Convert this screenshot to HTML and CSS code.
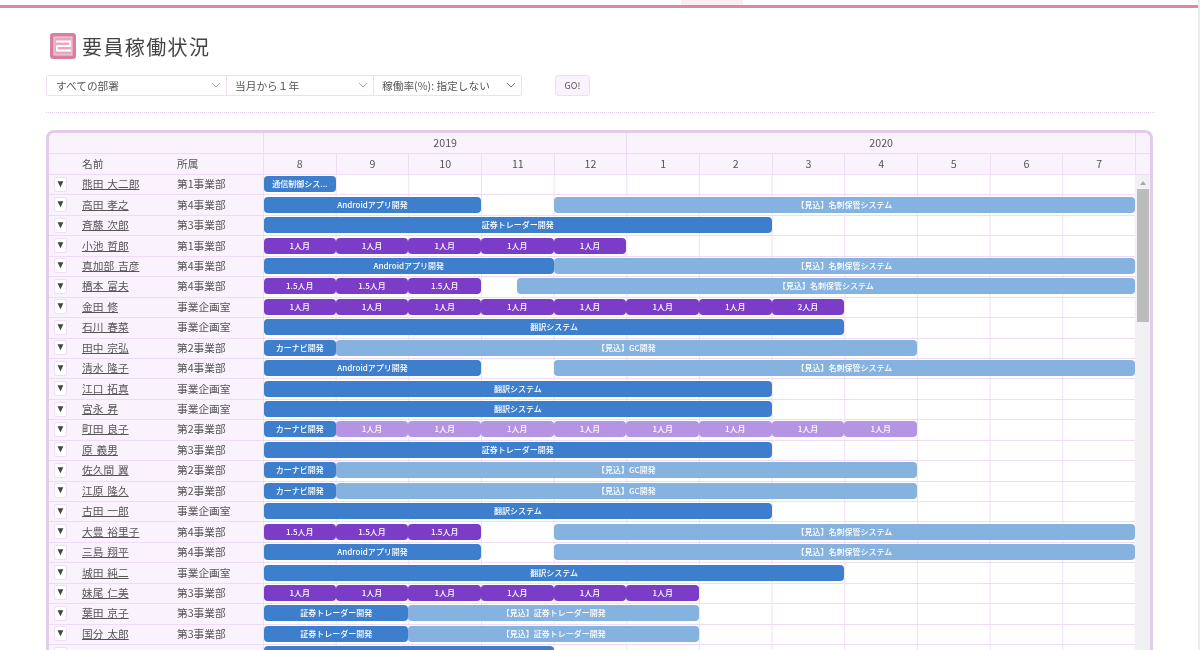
FILE: index.html
```html
<!DOCTYPE html>
<html lang="ja">
<head>
  <meta charset="UTF-8" />
  <title>要員稼働状況</title>
  <link rel="stylesheet" href="styles.css">
</head>
<body>
  <div class="topbar"><div class="topbar-tab"></div></div>
  <main class="content">
    <h1 class="title">
      <svg class="title-icon" width="26" height="26" viewBox="0 0 26 26">
        <rect width="26" height="26" rx="3" fill="#d87fa0"/>
        <rect x="4" y="4" width="18" height="18" fill="#e6a9c0" stroke="#f3d0dd" stroke-width="1"/>
        <path d="M6 8.5H20V13H7V17.5H21" fill="none" stroke="#fff" stroke-width="1.8"/>
      </svg>
      要員稼働状況
    </h1>

    <div class="filters">
      <div class="filter-group">
        <div class="filter filter-dept">すべての部署<svg width="10" height="6" viewBox="0 0 10 6"><path d="M1 1l4 4 4-4" fill="none" stroke="#aaa"/></svg></div>
        <div class="filter filter-term">当月から１年<svg width="10" height="6" viewBox="0 0 10 6"><path d="M1 1l4 4 4-4" fill="none" stroke="#aaa"/></svg></div>
        <div class="filter filter-rate">稼働率(%): 指定しない<svg width="10" height="6" viewBox="0 0 10 6"><path d="M1 1l4 4 4-4" fill="none" stroke="#777"/></svg></div>
      </div>
      <button class="go">GO!</button>
    </div>

    <div class="gantt">
      <div class="head">
        <div class="head-left"></div>
        <div class="head-years">
          <div class="year y2019">2019</div>
          <div class="year y2020">2020</div>
        </div>
        <div class="head-gutter"></div>
      </div>
      <div class="head">
        <div class="head-left">
          <span class="col-name">名前</span>
          <span class="col-dept">所属</span>
        </div>
        <div class="head-months">
          <div>8</div><div>9</div><div>10</div><div>11</div><div>12</div><div>1</div>
          <div>2</div><div>3</div><div>4</div><div>5</div><div>6</div><div>7</div>
        </div>
        <div class="head-gutter"></div>
      </div>

      <div class="body">
        <div class="rows">
          <div class="row"><div class="who"><button class="toggle">▼</button><a class="name">熊田 大二郎</a><span class="dept">第1事業部</span></div><div class="line">
            <div class="bar blue" style="grid-column: 1 / span 1">通信制御シス...</div>
          </div></div>
          <div class="row"><div class="who"><button class="toggle">▼</button><a class="name">高田 孝之</a><span class="dept">第4事業部</span></div><div class="line">
            <div class="bar blue" style="grid-column: 1 / span 3">Androidアプリ開発</div>
            <div class="bar sky" style="grid-column: 5 / span 8">【見込】名刺保管システム</div>
          </div></div>
          <div class="row"><div class="who"><button class="toggle">▼</button><a class="name">斉藤 次郎</a><span class="dept">第3事業部</span></div><div class="line">
            <div class="bar blue" style="grid-column: 1 / span 7">証券トレーダー開発</div>
          </div></div>
          <div class="row"><div class="who"><button class="toggle">▼</button><a class="name">小池 哲郎</a><span class="dept">第1事業部</span></div><div class="line">
            <div class="bar purple">1人月</div><div class="bar purple">1人月</div><div class="bar purple">1人月</div><div class="bar purple">1人月</div><div class="bar purple">1人月</div>
          </div></div>
          <div class="row"><div class="who"><button class="toggle">▼</button><a class="name">真加部 吉彦</a><span class="dept">第4事業部</span></div><div class="line">
            <div class="bar blue" style="grid-column: 1 / span 4">Androidアプリ開発</div>
            <div class="bar sky" style="grid-column: 5 / span 8">【見込】名刺保管システム</div>
          </div></div>
          <div class="row"><div class="who"><button class="toggle">▼</button><a class="name">橋本 富夫</a><span class="dept">第4事業部</span></div><div class="line">
            <div class="bar purple">1.5人月</div><div class="bar purple">1.5人月</div><div class="bar purple">1.5人月</div>
            <div class="bar sky mid-start" style="grid-column: 4 / span 9">【見込】名刺保管システム</div>
          </div></div>
          <div class="row"><div class="who"><button class="toggle">▼</button><a class="name">金田 修</a><span class="dept">事業企画室</span></div><div class="line">
            <div class="bar purple">1人月</div><div class="bar purple">1人月</div><div class="bar purple">1人月</div><div class="bar purple">1人月</div><div class="bar purple">1人月</div><div class="bar purple">1人月</div><div class="bar purple">1人月</div><div class="bar purple">2人月</div>
          </div></div>
          <div class="row"><div class="who"><button class="toggle">▼</button><a class="name">石川 春菜</a><span class="dept">事業企画室</span></div><div class="line">
            <div class="bar blue" style="grid-column: 1 / span 8">翻訳システム</div>
          </div></div>
          <div class="row"><div class="who"><button class="toggle">▼</button><a class="name">田中 宗弘</a><span class="dept">第2事業部</span></div><div class="line">
            <div class="bar blue" style="grid-column: 1 / span 1">カーナビ開発</div>
            <div class="bar sky" style="grid-column: 2 / span 8">【見込】GC開発</div>
          </div></div>
          <div class="row"><div class="who"><button class="toggle">▼</button><a class="name">清水 隆子</a><span class="dept">第4事業部</span></div><div class="line">
            <div class="bar blue" style="grid-column: 1 / span 3">Androidアプリ開発</div>
            <div class="bar sky" style="grid-column: 5 / span 8">【見込】名刺保管システム</div>
          </div></div>
          <div class="row"><div class="who"><button class="toggle">▼</button><a class="name">江口 拓真</a><span class="dept">事業企画室</span></div><div class="line">
            <div class="bar blue" style="grid-column: 1 / span 7">翻訳システム</div>
          </div></div>
          <div class="row"><div class="who"><button class="toggle">▼</button><a class="name">宮永 昇</a><span class="dept">事業企画室</span></div><div class="line">
            <div class="bar blue" style="grid-column: 1 / span 7">翻訳システム</div>
          </div></div>
          <div class="row"><div class="who"><button class="toggle">▼</button><a class="name">町田 良子</a><span class="dept">第2事業部</span></div><div class="line">
            <div class="bar blue">カーナビ開発</div>
            <div class="bar lilac">1人月</div><div class="bar lilac">1人月</div><div class="bar lilac">1人月</div><div class="bar lilac">1人月</div><div class="bar lilac">1人月</div><div class="bar lilac">1人月</div><div class="bar lilac">1人月</div><div class="bar lilac">1人月</div>
          </div></div>
          <div class="row"><div class="who"><button class="toggle">▼</button><a class="name">原 義男</a><span class="dept">第3事業部</span></div><div class="line">
            <div class="bar blue" style="grid-column: 1 / span 7">証券トレーダー開発</div>
          </div></div>
          <div class="row"><div class="who"><button class="toggle">▼</button><a class="name">佐久間 翼</a><span class="dept">第2事業部</span></div><div class="line">
            <div class="bar blue" style="grid-column: 1 / span 1">カーナビ開発</div>
            <div class="bar sky" style="grid-column: 2 / span 8">【見込】GC開発</div>
          </div></div>
          <div class="row"><div class="who"><button class="toggle">▼</button><a class="name">江原 隆久</a><span class="dept">第2事業部</span></div><div class="line">
            <div class="bar blue" style="grid-column: 1 / span 1">カーナビ開発</div>
            <div class="bar sky" style="grid-column: 2 / span 8">【見込】GC開発</div>
          </div></div>
          <div class="row"><div class="who"><button class="toggle">▼</button><a class="name">古田 一郎</a><span class="dept">事業企画室</span></div><div class="line">
            <div class="bar blue" style="grid-column: 1 / span 7">翻訳システム</div>
          </div></div>
          <div class="row"><div class="who"><button class="toggle">▼</button><a class="name">大豊 裕里子</a><span class="dept">第4事業部</span></div><div class="line">
            <div class="bar purple">1.5人月</div><div class="bar purple">1.5人月</div><div class="bar purple">1.5人月</div>
            <div class="bar sky" style="grid-column: 5 / span 8">【見込】名刺保管システム</div>
          </div></div>
          <div class="row"><div class="who"><button class="toggle">▼</button><a class="name">三島 翔平</a><span class="dept">第4事業部</span></div><div class="line">
            <div class="bar blue" style="grid-column: 1 / span 3">Androidアプリ開発</div>
            <div class="bar sky" style="grid-column: 5 / span 8">【見込】名刺保管システム</div>
          </div></div>
          <div class="row"><div class="who"><button class="toggle">▼</button><a class="name">城田 純二</a><span class="dept">事業企画室</span></div><div class="line">
            <div class="bar blue" style="grid-column: 1 / span 8">翻訳システム</div>
          </div></div>
          <div class="row"><div class="who"><button class="toggle">▼</button><a class="name">妹尾 仁美</a><span class="dept">第3事業部</span></div><div class="line">
            <div class="bar purple">1人月</div><div class="bar purple">1人月</div><div class="bar purple">1人月</div><div class="bar purple">1人月</div><div class="bar purple">1人月</div><div class="bar purple">1人月</div>
          </div></div>
          <div class="row"><div class="who"><button class="toggle">▼</button><a class="name">葉田 京子</a><span class="dept">第3事業部</span></div><div class="line">
            <div class="bar blue" style="grid-column: 1 / span 2">証券トレーダー開発</div>
            <div class="bar sky" style="grid-column: 3 / span 4">【見込】証券トレーダー開発</div>
          </div></div>
          <div class="row"><div class="who"><button class="toggle">▼</button><a class="name">国分 太郎</a><span class="dept">第3事業部</span></div><div class="line">
            <div class="bar blue" style="grid-column: 1 / span 2">証券トレーダー開発</div>
            <div class="bar sky" style="grid-column: 3 / span 4">【見込】証券トレーダー開発</div>
          </div></div>
          <div class="row"><div class="who"><button class="toggle"></button></div><div class="line">
            <div class="bar blue" style="grid-column: 1 / span 4"></div>
          </div></div>
        </div>
        <div class="scrollbar">
          <div class="scroll-up"></div>
          <div class="scroll-thumb"></div>
        </div>
      </div>
    </div>
  </main>
</body>
</html>
```

FILE: styles.css
```css
* { box-sizing: border-box; }
html, body { height: 650px; overflow: hidden; }
body {
  margin: 0;
  background-color: #fff;
  color: #555;
  font-family: "Noto Sans CJK JP", "Noto Sans", sans-serif;
  font-size: 10.7px;
  border-right: 2px solid #ececec;
  /* the reference is a slightly soft capture */
  filter: blur(0.45px);
}

/* top */
.topbar {
  height: 8px;
  border-bottom: 3px solid #d888a8;
  display: flex;
  justify-content: center;
  padding-left: 226px;
}
.topbar-tab {
  width: 62px;
  height: 5px;
  background-color: #fbeff3;
}
.content {
  padding: 25px 43px 0 46px;
}
.title {
  display: flex;
  align-items: center;
  gap: 6px;
  margin: 0 0 0 4px;
  height: 26px;
  font-size: 20px;
  font-weight: 400;
  letter-spacing: 1.4px;
  color: #444;
}

/* filters */
.filters {
  display: flex;
  gap: 33px;
  margin-top: 16px;
  padding-bottom: 16px;
  border-bottom: 1px dotted #e6cfee;
}
.filter-group {
  display: flex;
  height: 21px;
  width: 476px;
  border: 1px solid #eedff5;
  border-radius: 2px;
}
.filter {
  display: flex;
  align-items: center;
  justify-content: space-between;
  padding: 0 5px 1px 8px;
  border-left: 1px solid #eedff5;
}
.filter-dept { width: 179px; border-left: 0; padding-left: 9px; }
.filter-term { width: 147px; }
.filter-rate { flex: 1; }
.go {
  width: 35px;
  height: 21px;
  padding: 0;
  font: inherit;
  font-size: 9px;
  color: #555;
  background-color: #faf3fe;
  border: 1px solid #eedff5;
  border-radius: 3px;
}

/* gantt table */
.gantt {
  margin-top: 17px;
  width: 1107px;
  border: 3px solid #e3cce8;
  border-bottom: 0;
  border-radius: 8px 8px 0 0;
  background-color: #faf3fe;
}
.head {
  display: flex;
  height: 21px;
  border-bottom: 1px solid #eedcf5;
  text-align: center;
  line-height: 19px;
}
.head-left {
  display: flex;
  width: 214px;
  padding-left: 33px;
  flex: none;
}
.col-name { width: 95px; text-align: left; }
.col-dept { text-align: left; }
.head-years, .head-months {
  flex: 1;
  display: grid;
  grid-template-columns: repeat(12, 1fr);
}
.year { border-left: 1px solid #eedcf5; }
.y2019 { grid-column: span 5; }
.y2020 { grid-column: span 7; }
.head-months div { border-left: 1px solid #eedcf5; }
.head-gutter {
  width: 15px;
  flex: none;
  border-left: 1px solid #eedcf5;
}

/* rows */
.body { display: flex; }
.rows { flex: 1; min-width: 0; }
.row {
  display: flex;
  height: 20.45px;
  border-bottom: 1px solid #eedcf5;
}
.who {
  display: flex;
  align-items: center;
  width: 214px;
  flex: none;
  padding: 0 0 2px 5px;
}
.toggle {
  width: 13px;
  height: 15px;
  padding: 0 0 1px;
  margin: 1px 15px 0 0;
  font-size: 10px;
  line-height: 1;
  color: #444;
  background-color: #fff;
  border: 1px solid #eedff5;
  border-radius: 2px;
}
.name {
  width: 95px;
  color: #555;
  text-decoration: underline;
  word-spacing: 1.5px;
}
.line {
  flex: 1;
  display: grid;
  grid-template-columns: repeat(12, 1fr);
  align-items: center;
  background-color: #fff;
  background-image: linear-gradient(to right, #f0e0f5 1px, transparent 1px);
  background-size: calc(100% / 12) 100%;
}

/* bars */
.bar {
  height: 16px;
  margin-top: -1px;
  overflow: hidden;
  border-radius: 4px;
  color: #fff;
  font-size: 8px;
  font-weight: 500;
  line-height: 15px;
  text-align: center;
  white-space: nowrap;
}
.bar:first-child { margin-left: 1px; }
.blue { background-color: #3d7fcc; }
.sky { background-color: #86b2e0; }
.purple { background-color: #7b3cc8; }
.lilac { background-color: #b594e4; }
.mid-start { margin-left: 36px; }

/* scrollbar */
.scrollbar {
  width: 15px;
  flex: none;
  padding: 0 1px 0 2px;
  background-color: #f1f0f2;
}
.scroll-up {
  width: 0;
  margin: 6px auto 4px;
  border: 3px solid transparent;
  border-top: 0;
  border-bottom: 4px solid #aaa;
}
.scroll-thumb {
  height: 133px;
  background-color: #bcbcbc;
}
```
